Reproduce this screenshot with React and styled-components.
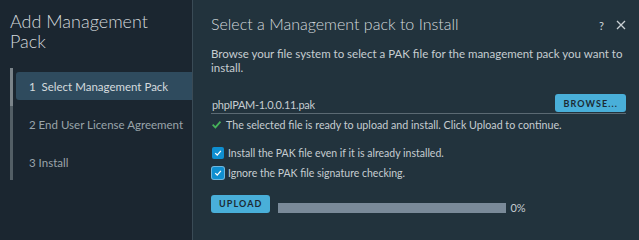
import styled, { createGlobalStyle } from "styled-components";

const Global = createGlobalStyle`
  html, body { margin: 0; padding: 0; background: #22333d; }
  body { font-family: Lato, "Noto Sans", sans-serif; }
`;

const Frame = styled.div`
  display: flex;
  width: 639px;
  height: 240px;
  overflow: hidden;
`;

const Side = styled.aside`
  width: 193px;
  flex-shrink: 0;
  background: #1b2630;
  border-right: 1px solid #3a4b56;
  padding: 11px 0 0 10px;
  box-sizing: border-box;
`;

const SideTitle = styled.h1`
  margin: 0;
  font-size: 18px;
  line-height: 20px;
  font-weight: 300;
  color: #d3d9dc;
`;

const Steps = styled.ol`
  list-style: none;
  margin: 17px 0 0;
  padding: 4px 0 0 3px;
  border-left: 3px solid #4f5a61;
  border-image: linear-gradient(#7b848a 0 34%, #535e65 34%) 1;
  display: flex;
  flex-direction: column;
  gap: 10px;
  height: 112px;
  box-sizing: border-box;
`;

const Step = styled.li`
  height: 28px;
  display: flex;
  align-items: center;
  padding-left: 13px;
  font-size: 11.5px;
  border-radius: 3px 0 0 3px;
  background: ${(p) => (p.$active ? "#2f4b5e" : "transparent")};
  color: ${(p) => (p.$active ? "#d5dbde" : "#9aa4aa")};
  white-space: nowrap;
`;

const Main = styled.main`
  flex: 1;
  padding: 12px 13px 0 18px;
  color: #c9d0d4;
`;

const Header = styled.div`
  display: flex;
  align-items: center;
  justify-content: space-between;
  height: 22px;
`;

const Title = styled.h2`
  margin: 0;
  font-size: 16px;
  font-weight: 300;
  color: #d3d9dc;
`;

const HeaderIcons = styled.div`
  display: flex;
  align-items: center;
  gap: 12px;
  margin-top: 4px;
  color: #d3d9dc;
  font-size: 11px;
`;

const Text = styled.p`
  margin: 13px 0 0;
  font-size: 11.5px;
  line-height: 14px;
  color: #c6cdd1;
`;

const FileRow = styled.div`
  margin-top: 19px;
  display: flex;
  align-items: center;
  justify-content: space-between;
  border-bottom: 1px solid #5b6a73;
  padding: 0 0 1px 1px;
`;

const FileName = styled.span`
  font-size: 11px;
  letter-spacing: -0.3px;
  margin-top: 3px;
  color: #c6cdd1;
`;

const Btn = styled.button`
  height: 18px;
  padding: 0 ${(p) => p.$pad || 10}px;
  border: 0;
  border-radius: 3px;
  background: #49afd9;
  color: #1c2a33;
  font-family: inherit;
  font-size: 9px;
  font-weight: 700;
  letter-spacing: 1.1px;
  cursor: pointer;
`;

const Status = styled.div`
  display: flex;
  align-items: center;
  gap: 4px;
  margin-top: 4px;
  font-size: 10.7px;
  line-height: 13px;
  color: #c6cdd1;
`;

const Options = styled.div`
  margin-top: 16px;
  display: flex;
  flex-direction: column;
  gap: 8px;
`;

const Option = styled.label`
  display: flex;
  align-items: center;
  gap: 4px;
  font-size: 10.5px;
  line-height: 12px;
  color: #c6cdd1;
`;

const Box = styled.span`
  width: 12px;
  height: 12px;
  border-radius: 2px;
  background: #0f8fd0;
  display: inline-flex;
  align-items: center;
  justify-content: center;
  box-shadow: ${(p) => (p.$focus ? "0 0 0 1px #6fb7de" : "none")};
  margin-left: 1px;
`;

const UploadRow = styled.div`
  margin-top: 14px;
  display: flex;
  align-items: center;
  gap: 8px;
`;

const Bar = styled.div`
  width: 228px;
  height: 10px;
  background: #7a8a99;
  margin-top: 8px;
`;

const Pct = styled.span`
  font-size: 11px;
  color: #c6cdd1;
  margin: 8px 0 0 -4px;
`;

const Check = ({ color = "#fff", size = 8 }) => (
  <svg width={size} height={size} viewBox="0 0 10 10">
    <path d="M1.5 5.2 L4 7.6 L8.6 2.4" fill="none" stroke={color} strokeWidth="1.6" />
  </svg>
);

export default function App() {
  return (
    <Frame>
      <Global />
      <Side>
        <SideTitle>
          Add Management
          <br />
          Pack
        </SideTitle>
        <Steps>
          <Step $active>1&nbsp; Select Management Pack</Step>
          <Step>2 End User License Agreement</Step>
          <Step>3 Install</Step>
        </Steps>
      </Side>
      <Main>
        <Header>
          <Title>Select a Management pack to Install</Title>
          <HeaderIcons>
            <span>?</span>
            <svg width="10" height="10" viewBox="0 0 10 10">
              <path d="M1 1 L9 9 M9 1 L1 9" stroke="#c9d0d4" strokeWidth="1.3" />
            </svg>
          </HeaderIcons>
        </Header>
        <Text>
          Browse your file system to select a PAK file for the management pack you want to install.
        </Text>
        <FileRow>
          <FileName>phpIPAM-1.0.0.11.pak</FileName>
          <Btn $pad={8}>BROWSE...</Btn>
        </FileRow>
        <Status>
          <Check color="#46b35a" size={11} />
          The selected file is ready to upload and install. Click Upload to continue.
        </Status>
        <Options>
          <Option>
            <Box>
              <Check />
            </Box>
            Install the PAK file even if it is already installed.
          </Option>
          <Option>
            <Box $focus>
              <Check />
            </Box>
            Ignore the PAK file signature checking.
          </Option>
        </Options>
        <UploadRow>
          <Btn $pad={8}>UPLOAD</Btn>
          <Bar />
          <Pct>0%</Pct>
        </UploadRow>
      </Main>
    </Frame>
  );
}
